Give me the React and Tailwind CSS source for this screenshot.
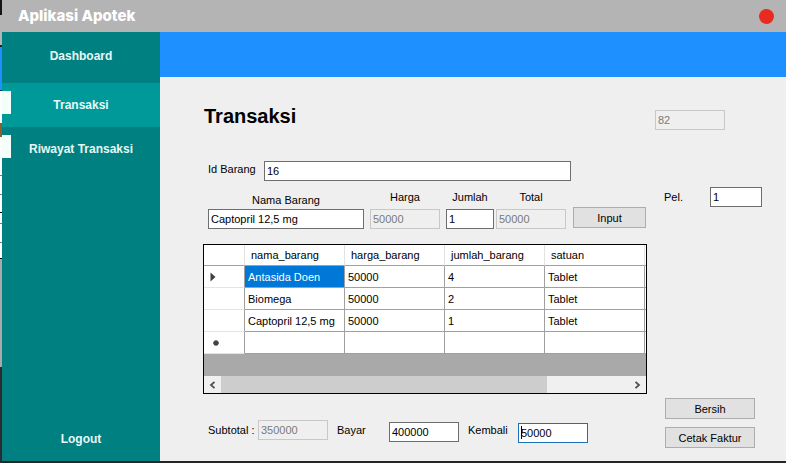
import React from "react";
import clsx from "clsx";

const rows = [
  { name: "Antasida Doen", price: "50000", qty: "4", unit: "Tablet" },
  { name: "Biomega", price: "50000", qty: "2", unit: "Tablet" },
  { name: "Captopril 12,5 mg", price: "50000", qty: "1", unit: "Tablet" },
  { name: "", price: "", qty: "", unit: "" },
];

function TextBox({ id, value, className, disabled = false, focused = false, label }) {
  return (
    <input
      id={id}
      type="text"
      aria-label={label}
      defaultValue={value}
      disabled={disabled}
      className={clsx(
        "block h-5 border pl-[2px] leading-4 outline-none",
        disabled
          ? "border-[#c8c8c8] bg-[#efefef] text-[#7a7a7a]"
          : focused
            ? "border-[#1d6fb8] bg-white text-black"
            : "border-[#6e6e6e] bg-white text-black",
        className
      )}
    />
  );
}

function Field({ id, label, value, width, disabled, className, gap = "gap-1" }) {
  return (
    <div className={clsx("flex flex-col items-center", gap, className)}>
      <label htmlFor={id} className="leading-4">
        {label}
      </label>
      <TextBox id={id} value={value} disabled={disabled} className={width} />
    </div>
  );
}

function FormButton({ children, className }) {
  return (
    <button
      type="button"
      className={clsx("h-[21px] border border-[#adadad] bg-[#e1e1e1] text-center leading-4 text-black", className)}
    >
      {children}
    </button>
  );
}

// Sliver of the window behind, visible along the left edge.
function BackdropEdge() {
  return (
    <div className="flex w-[2px] shrink-0 flex-col bg-white" aria-hidden="true">
      <div className="h-[15px] bg-[#151515]" />
      <div className="h-[30px] bg-[#b4b4b4]" />
      <div className="h-[2px] bg-[#16213a]" />
      <div className="h-[43px] bg-[#1e90ff]" />
      <div className="h-px bg-[#16325a]" />
      <div className="h-8 bg-white" />
      <div className="h-[14px] bg-[#8a6030]" />
      <div className="h-[38px] bg-white" />
      <div className="h-px bg-[#777777]" />
      <div className="h-[18px] bg-white" />
      <div className="h-px bg-[#777777]" />
      <div className="h-[17px] bg-white" />
      <div className="h-px bg-black" />
      <div className="h-[10px] bg-white" />
      <div className="h-px bg-[#777777]" />
      <div className="h-[18px] bg-white" />
      <div className="h-px bg-[#777777]" />
      <div className="h-[15px] bg-white" />
      <div className="h-px bg-black" />
      <div className="h-[108px] bg-[#a9a9a9]" />
      <div className="flex-1 bg-[#2b2b30]" />
    </div>
  );
}

function Sidebar() {
  const item = "flex w-full items-center justify-center text-center";
  return (
    <nav className="flex w-[158px] shrink-0 flex-col bg-[#008080] font-['Liberation_Sans',Arial,sans-serif] text-xs font-bold text-[#e8f8f8]">
      <button type="button" className={clsx(item, "h-[51px] pb-1")}>
        Dashboard
      </button>
      <div className="flex h-11 bg-[#009999]">
        <span className="mt-2 h-[23px] w-[9px] shrink-0 bg-[#f5fffa]" />
        <button type="button" className="h-full flex-1 pr-[9px] text-center">
          Transaksi
        </button>
      </div>
      <div className="flex h-11">
        <span className="mt-2 h-[23px] w-[9px] shrink-0 bg-[#f5fffa]" />
        <button type="button" className="h-full flex-1 whitespace-nowrap pr-[9px] text-center">
          Riwayat Transaksi
        </button>
      </div>
      <button type="button" className={clsx(item, "mt-auto h-11")}>
        Logout
      </button>
    </nav>
  );
}

function DataGrid() {
  const head = "h-[21px] border-b border-r border-b-[#a0a0a0] border-r-[#e3e3e3] p-0 pl-[6px] text-left font-normal";
  const cell = "h-[22px] whitespace-nowrap border-b border-r border-[#a0a0a0] p-0 pl-[3px]";
  return (
    <div className="mt-[15px] border border-black bg-[#a9a9a9]">
      <div className="overflow-hidden pb-[22px]">
        <table className="w-full table-fixed border-separate border-spacing-0 bg-white leading-4">
          <colgroup>
            <col className="w-[41px]" />
            <col className="w-[100px]" />
            <col className="w-[100px]" />
            <col className="w-[100px]" />
            <col className="w-[100px]" />
            <col />
          </colgroup>
          <thead>
            <tr>
              <th className={head} />
              <th className={head}>nama_barang</th>
              <th className={head}>harga_barang</th>
              <th className={head}>jumlah_barang</th>
              <th className={head}>satuan</th>
              <th className="border-b border-[#a0a0a0] p-0" />
            </tr>
          </thead>
          <tbody>
            {rows.map((row, i) => (
              <tr key={i}>
                <td className="h-[22px] border-b border-r border-b-[#e3e3e3] border-r-[#a0a0a0] p-0 pl-[6px]">
                  {i === 0 && (
                    <svg width="6" height="10" viewBox="0 0 6 10" className="block">
                      <path d="M0.5 0.5 L5.5 5 L0.5 9.5 Z" fill="#404040" />
                    </svg>
                  )}
                  {i === 3 && (
                    <svg width="12" height="8" viewBox="0 0 12 8" className="block">
                      <path d="M6 1V7M3 4H9M4 2L8 6M8 2L4 6" stroke="#404040" strokeWidth="1.3" />
                    </svg>
                  )}
                </td>
                <td className={clsx(cell, i === 0 && "bg-[#0078d7] text-white")}>{row.name}</td>
                <td className={cell}>{row.price}</td>
                <td className={cell}>{row.qty}</td>
                <td className={cell}>{row.unit}</td>
                <td className="border-b border-[#a0a0a0] p-0" />
              </tr>
            ))}
          </tbody>
        </table>
      </div>
      <div className="flex h-[17px] bg-[#f0f0f0]">
        <button type="button" aria-label="Gulir ke kiri" className="flex w-[17px] items-center justify-center">
          <svg width="7" height="8" viewBox="0 0 7 8">
            <path d="M5.5 0.8L2 4L5.5 7.2" fill="none" stroke="#505050" strokeWidth="1.8" />
          </svg>
        </button>
        <div className="flex-1">
          <div className="h-full w-4/5 bg-[#cdcdcd]" />
        </div>
        <button type="button" aria-label="Gulir ke kanan" className="flex w-[17px] items-center justify-center">
          <svg width="7" height="8" viewBox="0 0 7 8">
            <path d="M1.5 0.8L5 4L1.5 7.2" fill="none" stroke="#505050" strokeWidth="1.8" />
          </svg>
        </button>
      </div>
    </div>
  );
}

export default function App() {
  return (
    <div className="flex min-h-screen font-['Liberation_Sans',Arial,sans-serif] text-[11px] text-black">
      <BackdropEdge />
      <div className="flex flex-1 flex-col border-b-2 border-[#252525] bg-[#efefef]">
        <header className="flex h-8 items-center justify-between bg-[#b4b4b4] pl-4 pr-3">
          <h1 className="pt-px font-[Inter,sans-serif] text-[15px] font-extrabold text-white">Aplikasi Apotek</h1>
          <button type="button" aria-label="Tutup" className="size-[15px] rounded-full bg-[#e92a22]" />
        </header>
        <div className="flex flex-1">
          <Sidebar />
          <div className="flex flex-1 flex-col">
            <div className="h-[45px] bg-[#1e90ff]" />
            <main className="flex flex-1 pl-[43px] pr-6">
              <section className="flex-1 pt-[25px]">
                <h2 className="pl-px text-xl font-bold">Transaksi</h2>
                <div className="mt-[31px] flex pl-[5px]">
                  <label htmlFor="id-barang" className="w-14 leading-4">
                    Id Barang
                  </label>
                  <TextBox id="id-barang" value="16" className="w-[307px]" />
                </div>
                <div className="mt-2 flex items-end pl-[5px]">
                  <Field id="nama" label="Nama Barang" value="Captopril 12,5 mg" width="w-[156px]" gap="gap-px" />
                  <Field id="harga" label="Harga" value="50000" width="w-[70px]" disabled className="ml-[6px]" />
                  <Field id="jumlah" label="Jumlah" value="1" width="w-12" className="ml-[6px]" />
                  <Field id="total" label="Total" value="50000" width="w-[70px]" disabled className="ml-[2px]" />
                  <FormButton className="mb-px ml-[7px] w-[73px]">Input</FormButton>
                </div>
                <DataGrid />
                <div className="mt-[26px] flex h-[23px] items-start pl-[5px] leading-5">
                  <label htmlFor="subtotal" className="w-[50px]">
                    Subtotal :
                  </label>
                  <TextBox id="subtotal" value="350000" disabled className="w-[70px]" />
                  <label htmlFor="bayar" className="ml-[9px] w-[52px]">
                    Bayar
                  </label>
                  <TextBox id="bayar" value="400000" className="w-[70px] self-center" />
                  <label htmlFor="kembali" className="ml-[9px] w-[50px]">
                    Kembali
                  </label>
                  <div className="relative self-end">
                    <TextBox id="kembali" value="50000" focused className="w-[70px]" />
                    <span className="absolute left-[3px] top-[3px] h-[13px] w-px bg-black" aria-hidden="true" />
                  </div>
                </div>
              </section>
              <aside className="flex w-[115px] flex-col pb-[13px] pl-2 pt-[33px]">
                <TextBox label="No. Transaksi" value="82" disabled className="w-[70px]" />
                <div className="mt-[57px] flex items-center justify-between pl-[9px]">
                  <label htmlFor="pel">Pel.</label>
                  <TextBox id="pel" value="1" className="w-[52px]" />
                </div>
                <div className="mt-auto flex flex-col gap-2 pl-[10px]">
                  <FormButton className="w-[90px]">Bersih</FormButton>
                  <FormButton className="w-[90px]">Cetak Faktur</FormButton>
                </div>
              </aside>
            </main>
          </div>
        </div>
      </div>
    </div>
  );
}
